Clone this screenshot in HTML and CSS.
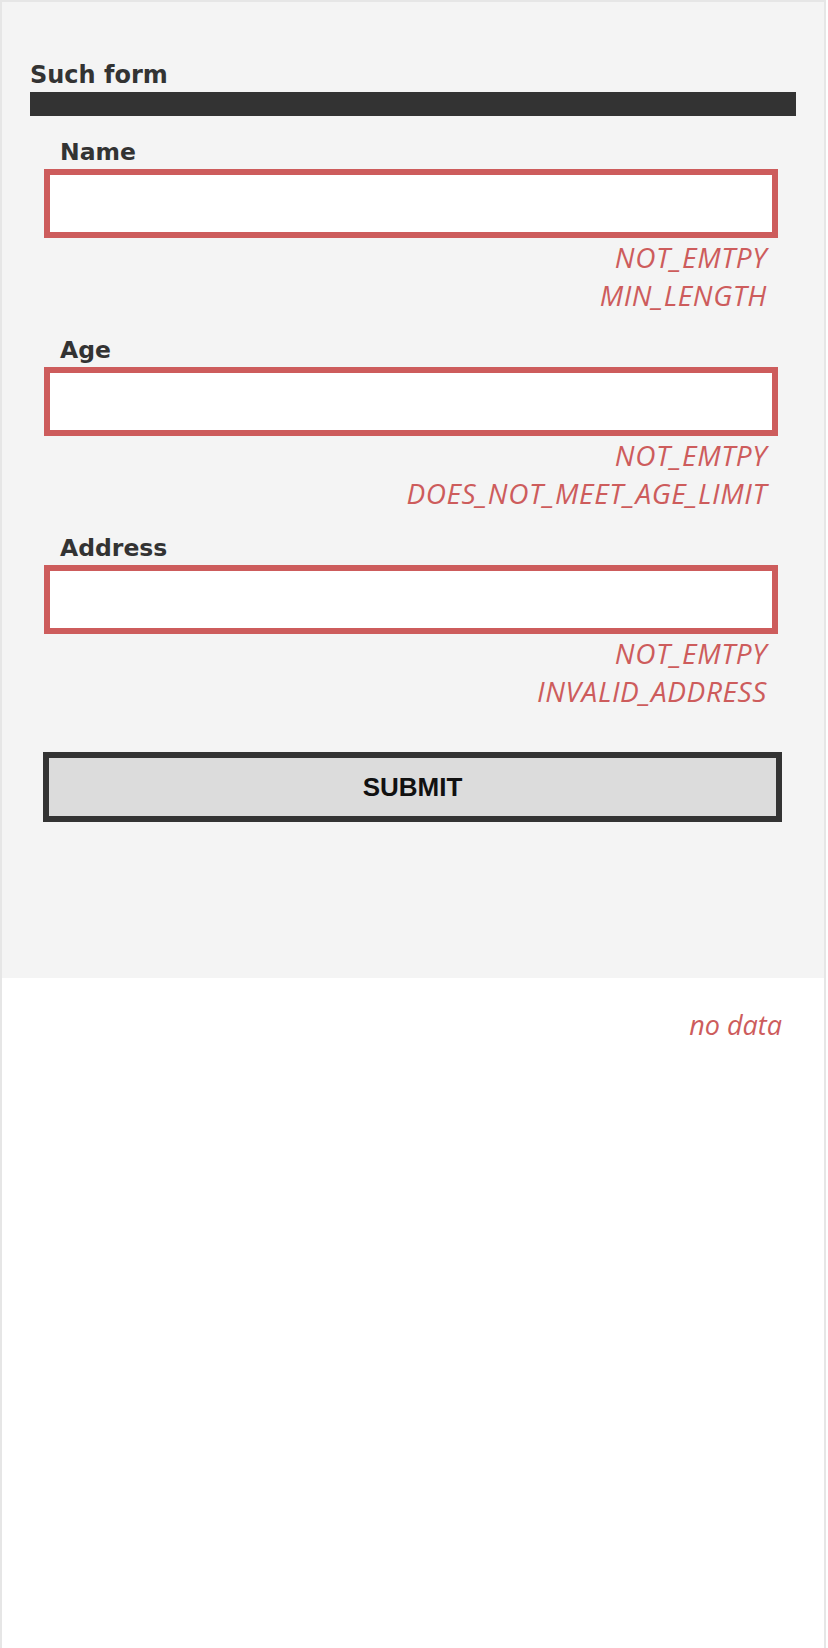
FILE: index.html
```html
<!DOCTYPE html>
<html lang="en">
<head>
<meta charset="utf-8">
<title>Such form</title>
<link rel="stylesheet" href="styles.css">
</head>
<body>
<div class="frame">
  <section class="panel">
    <h1 class="title">Such form</h1>
    <div class="bar"></div>
    <form class="form">
      <div class="field">
        <label class="label" for="name">Name</label>
        <input class="input" id="name" type="text">
        <div class="errors">
          <div class="error">NOT_EMTPY</div>
          <div class="error">MIN_LENGTH</div>
        </div>
      </div>
      <div class="field">
        <label class="label" for="age">Age</label>
        <input class="input" id="age" type="text">
        <div class="errors">
          <div class="error">NOT_EMTPY</div>
          <div class="error">DOES_NOT_MEET_AGE_LIMIT</div>
        </div>
      </div>
      <div class="field">
        <label class="label" for="address">Address</label>
        <input class="input" id="address" type="text">
        <div class="errors">
          <div class="error">NOT_EMTPY</div>
          <div class="error">INVALID_ADDRESS</div>
        </div>
      </div>
      <button class="submit" type="button">SUBMIT</button>
    </form>
  </section>
  <div class="result">no data</div>
</div>
</body>
</html>
```

FILE: styles.css
```css
html, body {
  margin: 0;
  padding: 0;
  background: #ffffff;
}

.frame {
  box-sizing: border-box;
  width: 826px;
  min-height: 1648px;
  border: 2px solid #e6e6e6;
  border-bottom: none;
  background: #ffffff;
}

.panel {
  background: #f4f4f4;
  padding: 59px 28px 156px 28px;
}

.title {
  margin: 0 0 3px 0;
  font-family: "DejaVu Sans", sans-serif;
  font-weight: bold;
  font-size: 24px;
  line-height: 28px;
  color: #333333;
}

.bar {
  height: 24px;
  background: #333333;
}

.form {
  display: flex;
  flex-direction: column;
  padding: 22px 0 0 14px;
}

.field {
  display: flex;
  flex-direction: column;
  margin-bottom: 22px;
}

.label {
  margin: 0 0 3px 16px;
  font-family: "DejaVu Sans", sans-serif;
  font-weight: bold;
  font-size: 23.5px;
  line-height: 28px;
  color: #333333;
}

.input {
  display: block;
  box-sizing: border-box;
  width: 734px;
  height: 69px;
  margin: 0;
  padding: 0 12px;
  border: 6px solid #cd5c5c;
  border-radius: 0;
  background: #ffffff;
  outline: none;
  font-size: 24px;
}

.errors {
  width: 734px;
  box-sizing: border-box;
  padding-right: 11px;
  text-align: right;
}

.error {
  font-family: "Open Sans", sans-serif;
  font-style: italic;
  font-size: 28px;
  letter-spacing: 0.6px;
  line-height: 38px;
  color: #cd5c5c;
}

.submit {
  display: flex;
  align-items: center;
  justify-content: center;
  box-sizing: border-box;
  width: 739px;
  height: 70px;
  margin: 20px 0 0 -1px;
  padding: 0;
  border: 6px solid #333333;
  border-radius: 0;
  background: #dcdcdc;
  font-family: "Liberation Sans", Arial, sans-serif;
  font-weight: bold;
  font-size: 26px;
  color: #111111;
}

.result {
  margin: 30px 42px 0 0;
  text-align: right;
  font-family: "Open Sans", sans-serif;
  font-style: italic;
  font-size: 27px;
  line-height: 34px;
  color: #cd5c5c;
}
```
